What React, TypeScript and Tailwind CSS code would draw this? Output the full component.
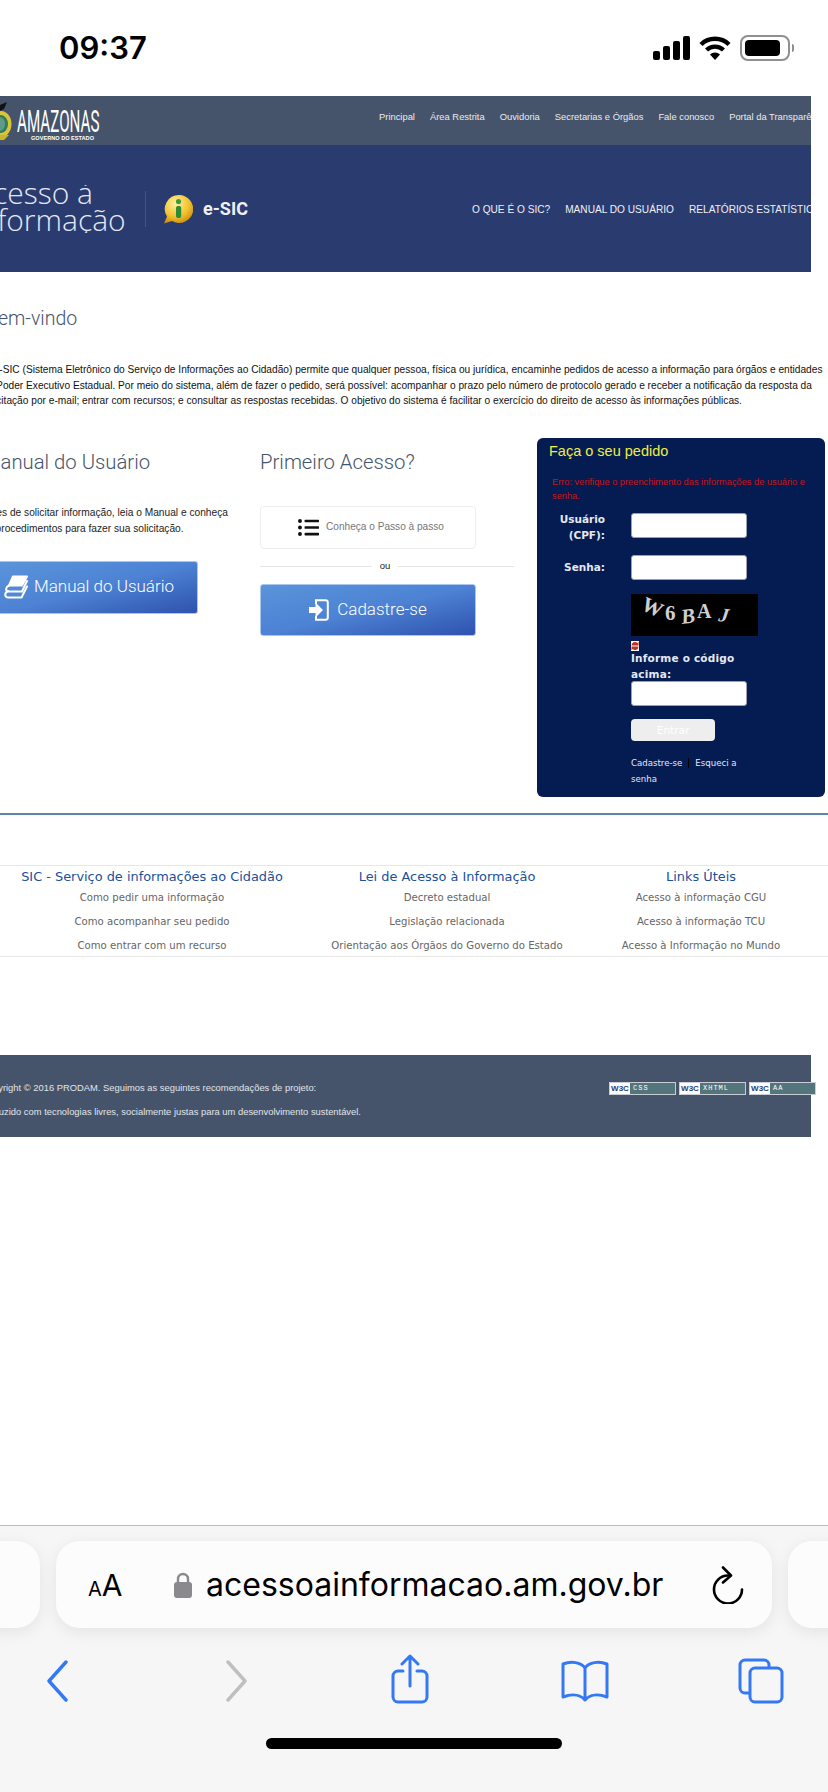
import React from "react";
import { FaListUl } from "react-icons/fa";

const sans = "font-['Liberation_Sans',Arial,sans-serif]";
const dejavu = "font-['DejaVu_Sans',Verdana,sans-serif]";
const roboto = "font-['Roboto',sans-serif] font-light";

const topLinks = [
  { label: "Principal", cls: "ml-[379px]" },
  { label: "Área Restrita", cls: "ml-[15px]" },
  { label: "Ouvidoria", cls: "ml-[15px]" },
  { label: "Secretarias e Órgãos", cls: "ml-[15px]" },
  { label: "Fale conosco", cls: "ml-[15px]" },
  { label: "Portal da Transparência", cls: "ml-[15px]" },
];

const footerColumns = [
  {
    title: "SIC - Serviço de informações ao Cidadão",
    width: "w-[304px]",
    links: ["Como pedir uma informação", "Como acompanhar seu pedido", "Como entrar com um recurso"],
  },
  {
    title: "Lei de Acesso à Informação",
    width: "w-[286px]",
    links: ["Decreto estadual", "Legislação relacionada", "Orientação aos Órgãos do Governo do Estado"],
  },
  {
    title: "Links Úteis",
    width: "w-[222px]",
    links: ["Acesso à informação CGU", "Acesso à informação TCU", "Acesso à Informação no Mundo"],
  },
];

const StatusIcons = () => (
  <div className="flex items-center gap-[9px]">
    <svg width="37" height="24" viewBox="0 0 37 24" fill="#000">
      <rect x="0" y="15" width="7" height="9" rx="2" />
      <rect x="10" y="10" width="7" height="14" rx="2" />
      <rect x="20" y="5" width="7" height="19" rx="2" />
      <rect x="30" y="0" width="7" height="24" rx="2" />
    </svg>
    <svg width="32" height="24" viewBox="0 0 32 24" fill="none" stroke="#000" strokeWidth="4.4">
      <path d="M2 8.5a20 20 0 0 1 28 0" />
      <path d="M7.5 14a12.5 12.5 0 0 1 17 0" />
      <path d="M16 24l-5-5.4a7 7 0 0 1 10 0z" fill="#000" stroke="none" />
    </svg>
    <div className="flex items-center gap-[2px]">
      <div className="w-[50px] h-[26px] rounded-[8px] border-2 border-[#8f8f8f] p-[3px]">
        <div className="w-[35px] h-full rounded-[4px] bg-black" />
      </div>
      <div className="w-[2px] h-[8px] rounded-r-full bg-[#8f8f8f]" />
    </div>
  </div>
);

const Crest = () => (
  <svg width="14" height="42" viewBox="0 0 14 42">
    <path d="M0 3 L7 0 L4 7 L0 9z" fill="#111" />
    <ellipse cx="1" cy="22" rx="10.5" ry="13" fill="#d9c43a" />
    <ellipse cx="1" cy="22" rx="7" ry="9" fill="#2f7d5b" />
    <path d="M0 15a7 7 0 0 1 5 7 7 7 0 0 1-5 7z" fill="#5f9a86" />
    <path d="M-4 33 L9 33 L4 38 L-2 38z" fill="#c9b52f" />
  </svg>
);

const InfoBubble = () => (
  <svg width="30" height="30" viewBox="0 0 30 30">
    <defs>
      <radialGradient id="bubble" cx="40%" cy="30%" r="75%">
        <stop offset="0%" stopColor="#fff2a0" />
        <stop offset="60%" stopColor="#f2c230" />
        <stop offset="100%" stopColor="#c98a10" />
      </radialGradient>
    </defs>
    <path d="M16 1a14 14 0 1 1-7 26l-8 2.5 3-7A14 14 0 0 1 16 1z" fill="url(#bubble)" />
    <circle cx="15.5" cy="7.5" r="2.6" fill="#3f9a3f" />
    <rect x="13" y="12" width="5.2" height="12" rx="2" fill="#2f8a35" />
  </svg>
);

const BookIcon = () => (
  <svg width="24" height="24" viewBox="0 0 24 24" fill="none" stroke="#fff" strokeWidth="2" strokeLinejoin="round" strokeLinecap="round">
    <path d="M9 1.500h14L18 10.500H5z" fill="#fff" />
    <path d="M5 10.500C1.500 12 1 16 4.500 16.500H18L23 6" />
    <path d="M4 16C0 18 .5 22.500 4.500 22.500H17.500L23 11.500" />
  </svg>
);

const SignInIcon = () => (
  <svg width="20" height="22" viewBox="0 0 20 22" fill="none">
    <path d="M7 5V1.200h9.500a2.300 2.300 0 0 1 2.300 2.300v15a2.300 2.300 0 0 1-2.300 2.300H7V17" stroke="#fff" strokeWidth="2" />
    <path d="M0 8h6.500V3.500L14 11l-7.500 7.500V14H0z" fill="#fff" />
  </svg>
);

const Captcha = () => (
  <svg width="127" height="42" viewBox="0 0 127 42" className="bg-black block">
    <g fill="#cfcfcf" fontFamily="'Liberation Serif', serif" fontSize="21">
      <text x="0" y="0" transform="translate(9 15) rotate(25)">W</text>
      <text x="0" y="0" transform="translate(34 26)">6</text>
      <text x="0" y="0" transform="translate(51 30) rotate(-8)" fontStyle="italic">B</text>
      <text x="0" y="0" transform="translate(66 24)" fontSize="20">A</text>
      <text x="0" y="0" transform="translate(87 27) rotate(8)" fontStyle="italic" fontSize="20">J</text>
    </g>
  </svg>
);

const FormInput = () => (
  <div className="w-[116px] h-[25px] rounded-[3px] bg-white border border-[#9aa0ad]" />
);

const LoginPanel = () => (
  <div className="w-[288px] h-[359px] rounded-[6px] bg-[#051c52] px-[12px] pt-[4px] text-[#e6e8f0]">
    <p className={`${sans} text-[14.5px] leading-[18px] text-[#eeee44]`}>Faça o seu pedido</p>
    <p className={`${sans} mt-[15px] ml-[3px] text-[9.25px] leading-[14px] text-[#c81414]`}>
      Erro: verifique o preenchimento das informações de usuário e senha.
    </p>
    <div className={`${dejavu} font-bold text-[10.5px] leading-[16px]`}>
      <div className="flex mt-[10px] h-[25px]">
        <div className="w-[56px] text-right -mt-[2px]">Usuário (CPF):</div>
        <div className="ml-[26px]">
          <FormInput />
        </div>
      </div>
      <div className="flex mt-[17px] items-center">
        <div className="w-[56px] text-right">Senha:</div>
        <div className="ml-[26px]">
          <FormInput />
        </div>
      </div>
      <div className="ml-[82px] mt-[14px] w-[130px]">
        <Captcha />
        <svg width="8" height="10" viewBox="0 0 8 10" className="block mt-[5px]">
          <rect width="8" height="10" fill="#fff" />
          <path d="M.5 4.500a3.500 3.500 0 0 1 6-2.500L7.500.5v4h-4zM7.500 5.500a3.500 3.500 0 0 1-6 2.500L.5 9.500v-4h4z" fill="#c0341e" />
        </svg>
        <p className="w-[116px] tracking-[0.2px] -mt-px">Informe o código acima:</p>
        <div className="-mt-[1px]">
          <FormInput />
        </div>
        <div className="mt-[13px] w-[84px] h-[22px] rounded-[4px] bg-[#eeeeee] flex items-center justify-center font-normal text-white">
          Entrar
        </div>
        <p className="mt-[14px] w-[116px] font-normal text-[8.6px] leading-[16px]">
          Cadastre-se
          <span className="inline-block w-px h-[10px] bg-[#000] mx-[6px] align-middle" />
          Esqueci a senha
        </p>
      </div>
    </div>
  </div>
);

const GradientButton = ({ children, cls }: { children: React.ReactNode; cls: string }) => (
  <div
    className={`${cls} rounded-[3px] border border-[#a9c6ee] bg-gradient-to-br from-[#5a94da] via-[#4d82d4] to-[#2f52ae] flex items-center text-white`}
  >
    {children}
  </div>
);

const App = () => {
  return (
    <div className="w-[828px] h-[1792px] overflow-hidden bg-white flex flex-col">
      <div className="h-[96px] shrink-0 flex items-center justify-between pl-[59px] pr-[34px]">
        <span className="font-['Inter',sans-serif] font-semibold text-[31px] text-black">09:37</span>
        <StatusIcons />
      </div>

      <div className="w-[811px] overflow-hidden shrink-0">
        <div className="h-[49px] bg-[#46546b] relative flex items-start text-white">
          <div className="absolute left-0 top-[6px]">
            <Crest />
          </div>
          <div className="absolute left-[17px] top-[12px] w-[120px]">
            <p className="font-['Roboto',sans-serif] text-[32px] leading-[27px] scale-x-[0.475] origin-left whitespace-nowrap">
              AMAZONAS
            </p>
            <p className={`${sans} font-bold text-[5.6px] leading-[6px] ml-[14px] whitespace-nowrap`}>GOVERNO DO ESTADO</p>
          </div>
          <div className={`${sans} flex text-[9.4px] leading-[12px] text-[#e8ebf0] mt-[15px] whitespace-nowrap`}>
            {topLinks.map((item) => (
              <span key={item.label} className={item.cls}>
                {item.label}
              </span>
            ))}
          </div>
        </div>
        <div className="h-[127px] bg-[#2a3b70] flex items-center text-white">
          <div className="w-[145px] shrink-0 overflow-hidden">
            <p className="font-['Open_Sans',sans-serif] font-light text-[30px] leading-[27px] -ml-[27px] w-[180px] text-[#e4e8f2] -mt-[6px]">
              <span className="ml-[2px]">Acesso à</span>
              <br />
              <span className="-ml-[1px]">Informação</span>
            </p>
          </div>
          <div className="w-px h-[36px] bg-[#3d5590] shrink-0" />
          <div className="ml-[17px] shrink-0">
            <InfoBubble />
          </div>
          <span className="ml-[10px] shrink-0 whitespace-nowrap font-['Roboto',sans-serif] font-bold text-[18px] text-[#eef0f6]">e-SIC</span>
          <div className={`${sans} flex gap-[15px] ml-[224px] text-[10.15px] text-[#eef0f6] whitespace-nowrap mt-[2px]`}>
            <span>O QUE É O SIC?</span>
            <span>MANUAL DO USUÁRIO</span>
            <span>RELATÓRIOS ESTATÍSTICOS</span>
          </div>
        </div>
      </div>

      <div className="h-[541px] shrink-0 overflow-hidden">
        <h2 className={`${roboto} text-[19.5px] leading-[24px] text-[#46546b] mt-[35px] -ml-[14px]`}>Bem-vindo</h2>
        <div className={`${sans} mt-[31px] text-[10.17px] leading-[15.5px] text-[#111] whitespace-nowrap`}>
          <p className="-ml-[17px]">
            O e-SIC (Sistema Eletrônico do Serviço de Informações ao Cidadão) permite que qualquer pessoa, física ou jurídica, encaminhe pedidos de acesso a informação para órgãos e entidades
          </p>
          <p className="-ml-[18px]">
            do Poder Executivo Estadual. Por meio do sistema, além de fazer o pedido, será possível: acompanhar o prazo pelo número de protocolo gerado e receber a notificação da resposta da
          </p>
          <p className="-ml-[19px]">
            solicitação por e-mail; entrar com recursos; e consultar as respostas recebidas. O objetivo do sistema é facilitar o exercício do direito de acesso às informações públicas.
          </p>
        </div>
        <div className="flex mt-[29px]">
          <div className="w-[260px] shrink-0 overflow-hidden pt-[10px]">
            <h3 className={`${roboto} text-[20.3px] leading-[28px] text-[#46546b] -ml-[17px] whitespace-nowrap`}>Manual do Usuário</h3>
            <div className={`${sans} mt-[29px] text-[10.2px] leading-[16px] text-[#222] whitespace-nowrap`}>
              <p className="-ml-[19px]">Antes de solicitar informação, leia o Manual e conheça</p>
              <p className="-ml-[18px]">os procedimentos para fazer sua solicitação.</p>
            </div>
            <GradientButton cls="w-[198px] h-[53px] mt-[24px] pl-[4px] gap-[6px] rounded-l-none border-l-0">
              <BookIcon />
              <span className={`${roboto} text-[17px]`}>Manual do Usuário</span>
            </GradientButton>
          </div>

          <div className="w-[254px] shrink-0 pt-[10px]">
            <h3 className={`${roboto} text-[20.3px] leading-[28px] text-[#46546b]`}>Primeiro Acesso?</h3>
            <div className="mt-[30px] w-[216px] h-[43px] rounded-[4px] border border-[#eeeeee] flex items-center justify-center gap-[7px] pl-[6px]">
              <FaListUl className="text-[21px] text-[#111]" />
              <span className={`${sans} text-[10.1px] text-[#777]`}>Conheça o Passo à passo</span>
            </div>
            <div className={`${sans} flex items-center mt-[12px] h-[12px] text-[9.5px] text-[#222]`}>
              <div className="w-[112px] h-px bg-[#e4e4e4]" />
              <span className="w-[26px] text-center">ou</span>
              <div className="flex-1 h-px bg-[#e4e4e4]" />
            </div>
            <GradientButton cls="w-[216px] h-[52px] mt-[11px] justify-center gap-[8px]">
              <SignInIcon />
              <span className={`${roboto} text-[17px]`}>Cadastre-se</span>
            </GradientButton>
          </div>

          <div className="ml-[23px] shrink-0">
            <LoginPanel />
          </div>
        </div>
      </div>

      <div className="h-[2px] bg-[#5b86a5] shrink-0" />

      <div className="mt-[50px] border-y border-[#e8e8e8] h-[92px] shrink-0 flex pt-[2px]">
        {footerColumns.map((col) => (
          <div key={col.title} className={`${col.width} ${dejavu} shrink-0 text-center`}>
            <p className="text-[12.9px] leading-[18px] text-[#1a4f9c] whitespace-nowrap">{col.title}</p>
            <div className="text-[10.15px] leading-[24px] text-[#666] whitespace-nowrap">
              {col.links.map((link) => (
                <p key={link}>{link}</p>
              ))}
            </div>
          </div>
        ))}
      </div>

      <div className="mt-[98px] w-[811px] h-[82px] bg-[#46546b] shrink-0 relative text-[#e0e4ea]">
        <div className={`${sans} text-[9.4px] pt-[27px] leading-[12px] whitespace-nowrap`}>
          <p className="-ml-[19px]">Copyright © 2016 PRODAM. Seguimos as seguintes recomendações de projeto:</p>
          <p className="-ml-[21px] mt-[12px]">Produzido com tecnologias livres, socialmente justas para um desenvolvimento sustentável.</p>
        </div>
        <div className="absolute left-[609px] top-[27px] flex gap-[3px]">
          {["CSS", "XHTML", "AA"].map((badge) => (
            <div key={badge} className="w-[67px] h-[13px] border border-[#c9ced6] bg-[#55757c] flex items-center">
              <span className={`${sans} w-[20px] h-full bg-white text-[#1c3f78] text-[8px] leading-[11px] font-bold text-center`}>W3C</span>
              <span className="font-['Liberation_Mono',monospace] ml-[3px] text-[7px] leading-[11px] tracking-[1px] text-white">{badge}</span>
            </div>
          ))}
        </div>
      </div>

      <div className="flex-1 min-h-0" />

      <div className="h-[267px] shrink-0 bg-[#f6f6f6] border-t border-[#bdbdbd] flex flex-col">
        <div className="mt-[15px] flex h-[87px] gap-[16px] -ml-[20px]">
          <div className="w-[60px] shrink-0 rounded-r-[24px] bg-[#fcfcfc] shadow-[0_4px_16px_rgba(0,0,0,0.08)]" />
          <div className="w-[716px] shrink-0 rounded-[24px] bg-[#fcfcfc] shadow-[0_4px_16px_rgba(0,0,0,0.08)] flex items-center pl-[32px] text-black">
            <span className="font-['Inter',sans-serif] leading-none whitespace-nowrap w-[39px] shrink-0">
              <span className="text-[20px]">A</span>
              <span className="text-[30px]">A</span>
            </span>
            <svg width="18" height="26" viewBox="0 0 18 26" className="ml-[47px] shrink-0" fill="#8a8a8e">
              <path d="M4 11V7a5 5 0 0 1 10 0v4" fill="none" stroke="#8a8a8e" strokeWidth="2.4" />
              <rect x="0" y="10" width="18" height="16" rx="3" />
            </svg>
            <span className="ml-[14px] w-[454px] shrink-0 font-['Inter',sans-serif] text-[32px] leading-none whitespace-nowrap">acessoainformacao.am.gov.br</span>
            <svg width="32" height="38" viewBox="0 0 32 38" fill="none" stroke="#000" strokeWidth="2.6" strokeLinecap="round" strokeLinejoin="round" className="ml-[52px] shrink-0">
              <path d="M16 9.500A14 14 0 1 0 30 23.500" />
              <path d="M11 1.500l8 8-8 7" />
            </svg>
          </div>
          <div className="w-[60px] shrink-0 rounded-l-[24px] bg-[#fcfcfc] shadow-[0_4px_16px_rgba(0,0,0,0.08)]" />
        </div>

        <div className="flex items-center h-[66px] mt-[20px]">
          <svg width="22" height="42" viewBox="0 0 22 42" fill="none" stroke="#3478f6" strokeWidth="3.4" strokeLinecap="round" strokeLinejoin="round" className="ml-[46px]">
            <path d="M20 2L3 21l17 19" />
          </svg>
          <svg width="22" height="42" viewBox="0 0 22 42" fill="none" stroke="#bfbfbf" strokeWidth="3.4" strokeLinecap="round" strokeLinejoin="round" className="ml-[158px]">
            <path d="M2 2l17 19L2 40" />
          </svg>
          <svg width="38" height="50" viewBox="0 0 38 50" fill="none" stroke="#3478f6" strokeWidth="3" strokeLinecap="round" strokeLinejoin="round" className="ml-[143px] -mt-[4px]">
            <path d="M12 17H7a5 5 0 0 0-5 5v21a5 5 0 0 0 5 5h24a5 5 0 0 0 5-5V22a5 5 0 0 0-5-5h-5" />
            <path d="M19 32V2M11 10l8-8 8 8" />
          </svg>
          <svg width="48" height="42" viewBox="0 0 48 42" fill="none" stroke="#3478f6" strokeWidth="3" strokeLinecap="round" strokeLinejoin="round" className="ml-[132px]">
            <path d="M24 8C20 2 10 1 2 4v33c8-3 17-3 22 3 5-6 14-6 22-3V4c-8-3-18-2-22 4zM24 8v32" />
          </svg>
          <svg width="46" height="46" viewBox="0 0 46 46" fill="none" stroke="#3478f6" strokeWidth="3" strokeLinejoin="round" className="ml-[129px]">
            <path d="M31 10V7a5 5 0 0 0-5-5H7a5 5 0 0 0-5 5v23a5 5 0 0 0 5 5h4" />
            <rect x="12" y="10" width="32" height="34" rx="5" />
          </svg>
        </div>

        <div className="mt-[24px] mx-auto w-[296px] h-[11px] rounded-full bg-black" />
      </div>
    </div>
  );
};

export default App;
